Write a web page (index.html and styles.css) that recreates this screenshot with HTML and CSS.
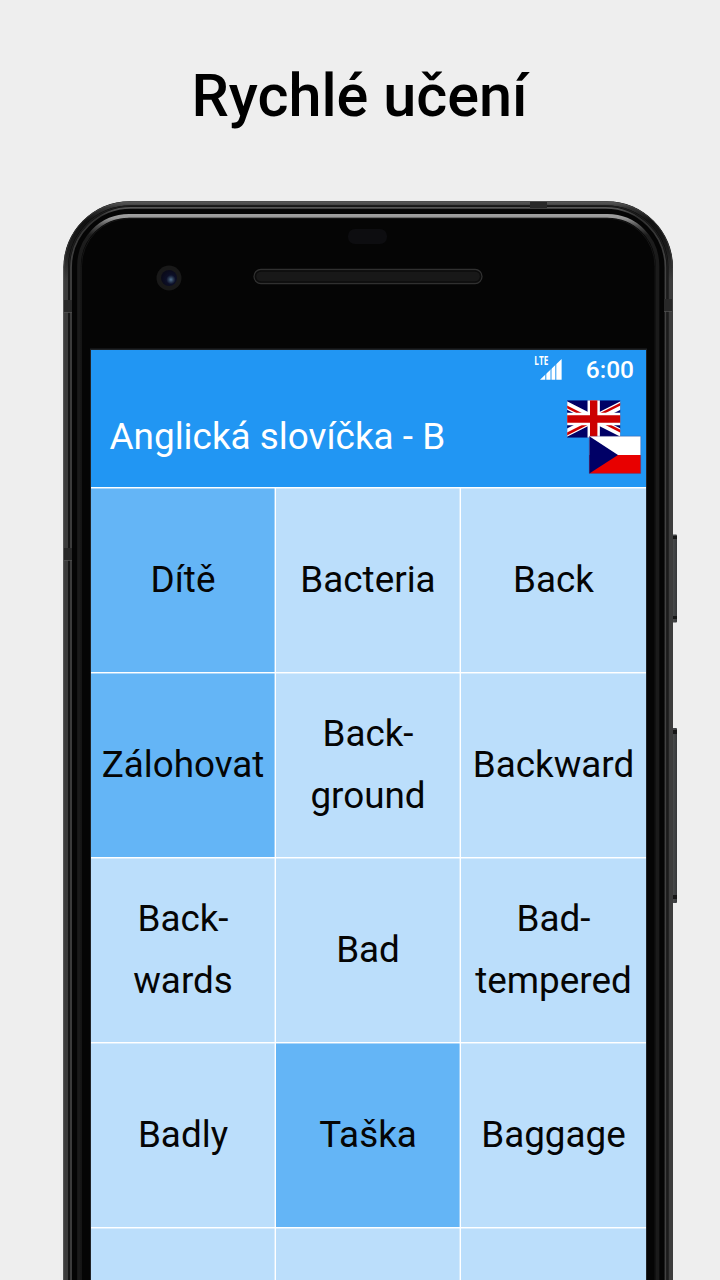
FILE: index.html
```html
<!DOCTYPE html>
<html lang="cs">
<head>
<meta charset="utf-8">
<title>Rychlé učení</title>
<link rel="stylesheet" href="styles.css">
</head>
<body>
<main class="page">
  <h1 class="headline">Rychlé učení</h1>
  <div class="phone">
    <svg class="frame" viewBox="0 0 626 1084" width="626" height="1084" fill="none">
      <defs>
        <linearGradient id="outer" x1="0" y1="5" x2="0" y2="85" gradientUnits="userSpaceOnUse"><stop offset="0" stop-color="#606060"/><stop offset=".08" stop-color="#343434"/><stop offset=".25" stop-color="#101010"/><stop offset=".6" stop-color="#1c1c1c"/><stop offset="1" stop-color="#3c3c3c"/></linearGradient>
        <linearGradient id="shine" x1="0" y1="18" x2="0" y2="60" gradientUnits="userSpaceOnUse"><stop offset="0" stop-color="#a0a0a0"/><stop offset=".1" stop-color="#979797"/><stop offset=".28" stop-color="#505050"/><stop offset=".5" stop-color="#1d1d1d"/><stop offset="1" stop-color="#1b1b1b"/></linearGradient>
        <linearGradient id="ridge" x1="0" y1="8" x2="0" y2="70" gradientUnits="userSpaceOnUse"><stop offset="0" stop-color="#686868"/><stop offset=".2" stop-color="#303030"/><stop offset="1" stop-color="#424242"/></linearGradient>
        <linearGradient id="key" x1="0" x2="1"><stop offset="0" stop-color="#222"/><stop offset=".5" stop-color="#494b4c"/><stop offset="1" stop-color="#343638"/></linearGradient>
        <radialGradient id="lens" cx=".62" cy=".6" r=".58"><stop offset="0" stop-color="#53708f"/><stop offset=".28" stop-color="#27364e"/><stop offset=".5" stop-color="#0c0f28"/><stop offset="1" stop-color="#0a0a1a"/></radialGradient>
      </defs>
      <rect x="609" y="338.500" width="8" height="88" rx="1" fill="url(#key)"/>
      <path d="M610 340h7v3h-7zM610 420h7v3h-7z" fill="#161616"/>
      <rect x="609" y="532" width="8" height="175" rx="1" fill="url(#key)"/>
      <path d="M610 534h7v4h-7zM610 699h7v4h-7z" fill="#161616"/>
      <rect x="3.400" y="5.300" width="609.600" height="1200" rx="66" fill="#050505"/>
      <rect x="5.900" y="7.500" width="604.600" height="1200" rx="64" stroke="url(#outer)" stroke-width="4.200"/>
      <rect x="3.900" y="6" width="608.600" height="1200" rx="65.500" stroke="#505050" stroke-opacity=".5"/>
      <rect x="9" y="10" width="598.500" height="1200" rx="62" stroke="#1c1c1c" stroke-width="1.500"/>
      <rect x="11" y="11.800" width="594.500" height="1200" rx="60" stroke="url(#ridge)" stroke-width="1.800"/>
      <rect x="19" y="19.900" width="578.500" height="1200" rx="50" stroke="url(#shine)" stroke-width="3.600"/>
      <rect x="21.500" y="22.300" width="573.500" height="1200" rx="48" stroke="#252525" stroke-width="1" stroke-opacity=".5"/>
      <path d="M470 6h17v6h-17zM4 104h8v12H4zM604 103h8v12h-8zM4 352h8v12H4z" fill="#282828"/>
      <path d="M4 116.500h8M604 115.500h8M4 364.500h8" stroke="#505050" stroke-opacity=".8"/>
      <rect x="288" y="33" width="39" height="15" rx="7" fill="#0d0d10"/>
      <circle cx="109" cy="82" r="12.500" fill="#191919"/>
      <circle cx="109" cy="82" r="8" fill="url(#lens)"/>
      <rect x="194" y="73.500" width="228" height="14" rx="7" fill="#181818" stroke="#303030" stroke-width="1.300"/>
      <rect x="195.500" y="75" width="225" height="11" rx="5.500" stroke="#0c0c0c" stroke-width="1.400"/>
      <rect x="30" y="152.500" width="557" height="1000" fill="#202326"/>
    </svg>
    <div class="screen">
      <header class="appbar">
        <div class="status">
          <svg class="signal" width="30" height="34" viewBox="0 -4 30 34"><path fill="#fff" d="M7 22.800 28.600 2v20.800z"/><path d="M12.800 15v8M18 10v13M22.800 6v17" stroke="#2196f3" stroke-width="1"/><text class="lte" x="1.300" y="8.400" textLength="14" lengthAdjust="spacingAndGlyphs">LTE</text></svg>
          <span class="clock">6:00</span>
        </div>
        <div class="toolbar">
          <h2 class="title">Anglická slovíčka - B</h2>
          <svg class="flags" width="76" height="76" viewBox="0 0 76 76">
            <svg x="1.200" y="1.300" width="53" height="37.500" viewBox="8.500 0 43 30" preserveAspectRatio="none">
              <clipPath id="quarters"><path d="M30 15h30v15zM30 15v15H0zM30 15H0V0zM30 15V0h30z"/></clipPath>
              <path fill="#006" d="M0 0h60v30H0z"/>
              <path d="M0 0l60 30M60 0L0 30" stroke="#fff" stroke-width="6"/>
              <path d="M0 0l60 30M60 0L0 30" stroke="#c00" stroke-width="4" clip-path="url(#quarters)"/>
              <path d="M30 0v30M0 15h60" stroke="#fff" stroke-width="10"/>
              <path d="M30 0v30M0 15h60" stroke="#c00" stroke-width="6"/>
            </svg>
            <path fill="#fff" d="M23.300 37.200h51.400v19H23.300z"/><path fill="#e80000" d="M23.300 56h51.400v18.400H23.300z"/><path fill="#006" d="M23.300 37.200 52 56 23.300 74.400z"/>
            <path d="M23.300 37.200h51.400v37.200H23.300z" fill="none" stroke="#448" stroke-width=".6" stroke-opacity=".6"/>
          </svg>
        </div>
      </header>
      <section class="grid">
        <div class="cell picked">Dítě</div><div class="cell">Bacteria</div><div class="cell">Back</div>
        <div class="cell picked">Zálohovat</div><div class="cell">Back-<br>ground</div><div class="cell">Backward</div>
        <div class="cell">Back-<br>wards</div><div class="cell">Bad</div><div class="cell">Bad-<br>tempered</div>
        <div class="cell">Badly</div><div class="cell picked">Taška</div><div class="cell">Baggage</div>
        <div class="cell"></div><div class="cell"></div><div class="cell"></div>
      </section>
    </div>
  </div>
</main>
</body>
</html>
```
FILE: styles.css
```css
* { box-sizing: border-box; }
body { margin: 0; background: #eee; font-family: Roboto, sans-serif; }
.page { width: 720px; height: 1280px; overflow: hidden; display: flex; flex-direction: column; }
.headline { margin: 0; height: 196px; padding: 61px 1px 0 0; text-align: center; font-size: 59.4px; line-height: 70px; font-weight: 500; color: #000; }
.phone { position: relative; flex: none; width: 626px; height: 1084px; margin-left: 60px; padding: 154px 40px 0 31px; overflow: hidden; }
.frame { position: absolute; left: 0; top: 0; }
.screen { position: relative; width: 555px; height: 930px; overflow: hidden; background: #fff; }
.appbar { height: 137px; background: #2196f3; color: #fff; display: flex; flex-direction: column; }
.status { height: 40px; display: flex; justify-content: flex-end; align-items: center; padding-right: 12px; gap: 23px; }
.signal { overflow: visible; }
.lte { font: 700 11.5px "Open Sans", sans-serif; fill: #fff; }
.clock { font-size: 24.5px; font-weight: 500; line-height: 40px; }
.toolbar { flex: 1; display: flex; justify-content: space-between; align-items: flex-start; padding: 9px 4px 0 18.5px; }
.title { margin: 16px 0 0; font-size: 36.9px; line-height: 44px; font-weight: 400; white-space: nowrap; }
.grid { display: grid; grid-template-columns: 184px 184px 185px; grid-auto-rows: 184px; gap: 1px; padding-top: 1px; }
.cell { display: flex; align-items: center; justify-content: center; text-align: center; background: #bbdefb; color: #050505; font-size: 36.85px; line-height: 62px; padding-bottom: 1px; box-shadow: inset 0 1px rgba(255, 255, 255, .45), inset -1px 0 rgba(255, 255, 255, .4); }
.cell:nth-child(3n) { box-shadow: inset 0 1px rgba(255, 255, 255, .45); }
.picked { background: #64b5f6; }
```
